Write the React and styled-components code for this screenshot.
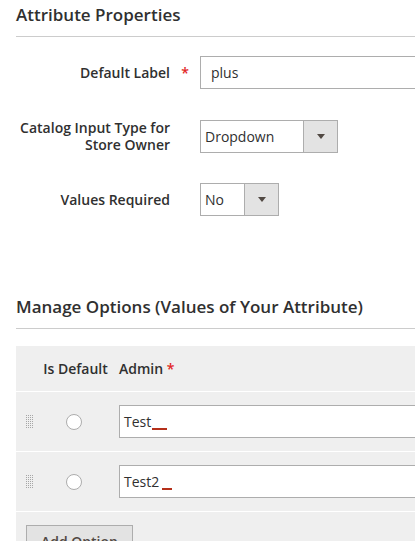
import React from 'react';
import styled, {createGlobalStyle} from 'styled-components';

const GlobalStyle = createGlobalStyle`
  body {
    margin: 0;
    background: #fff;
    font-family: "Open Sans", "Liberation Sans", sans-serif;
    color: #303030;
    overflow: hidden;
  }
`;

const Page = styled.div`
  width: 415px;
  height: 541px;
  overflow: hidden;
`;

const Inner = styled.div`
  width: 520px;
  padding-left: 16px;
  box-sizing: border-box;
`;

const SectionTitle = styled.h2`
  margin: 0;
  margin-top: ${p => p.top || 0}px;
  padding: 4px 0 10px;
  font-size: 17px;
  line-height: 22px;
  font-weight: 600;
  color: #303030;
  border-bottom: 1px solid #ccc;
`;

const Fields = styled.div`
  display: flex;
  flex-direction: column;
  gap: 30px;
  padding-top: 19px;
`;

const FieldRow = styled.div`
  display: grid;
  grid-template-columns: 154px 30px 1fr;
  align-items: center;
`;

const Label = styled.label`
  text-align: right;
  font-size: 14px;
  line-height: 17px;
  font-weight: 600;
  color: #303030;
`;

const Required = styled.span`
  color: #e22626;
  font-size: 14px;
  text-align: center;
  font-weight: 600;
`;

const TextInput = styled.div`
  height: 33px;
  box-sizing: border-box;
  border: 1px solid #adadad;
  border-right: none;
  background: #fff;
  display: flex;
  align-items: center;
  padding-left: ${p => p.pad || 10}px;
  font-size: 14px;
  color: #303030;
`;

const Select = styled.div`
  width: ${p => p.width}px;
  height: 33px;
  box-sizing: border-box;
  border: 1px solid #adadad;
  background: #fff;
  display: flex;
  font-size: 14px;
  color: #303030;
`;

const SelectValue = styled.span`
  flex: 1;
  display: flex;
  align-items: center;
  padding-left: 4px;
`;

const SelectArrow = styled.span`
  width: 33px;
  border-left: 1px solid #adadad;
  background: #e3e3e3;
  display: flex;
  align-items: center;
  justify-content: center;

  &::after {
    content: "";
    border-left: 4px solid transparent;
    border-right: 4px solid transparent;
    border-top: 5px solid #514943;
  }
`;

const Table = styled.div`
  margin-top: 17px;
  background: #efefef;
`;

const TableRow = styled.div`
  display: grid;
  grid-template-columns: 26px 66px 1fr;
  align-items: center;
  height: ${p => p.h}px;
  border-bottom: 1px solid #fff;

  & > :nth-child(3) {
    margin-left: 11px;
  }
`;

const HeadCell = styled.span`
  font-size: 14px;
  font-weight: 600;
  color: #303030;
  text-align: ${p => p.$center ? 'center' : 'left'};
  padding-left: ${p => p.$center ? 1 : 0}px;
`;

const Handle = styled.svg`
  margin-left: 10px;
  display: block;
`;

const Radio = styled.span`
  justify-self: center;
  margin-left: -3px;
  width: 16px;
  height: 16px;
  box-sizing: border-box;
  border-radius: 50%;
  border: 1px solid #adadad;
  background: #fff;
`;

const Squiggle = styled.span`
  display: inline-block;
  width: ${p => p.$w}px;
  margin-left: ${p => p.$gap}px;
  height: 14px;
  border-bottom: 2px solid #b5301a;
`;

const Footer = styled.div`
  padding: 13px 10px;
`;

const Button = styled.button`
  height: 33px;
  padding: 0 14px;
  background: #e3e3e3;
  border: 1px solid #adadad;
  font-family: inherit;
  font-size: 14px;
  font-weight: 600;
  color: #514943;
`;

const DragHandle = () => (
  <Handle width="8" height="14" viewBox="0 0 8 14">
    {Array.from({length: 7}).map((_, r) =>
      Array.from({length: 4}).map((_, c) => (
        <rect key={r + '-' + c} x={c * 2} y={r * 2} width="1" height="1" fill="#a6a6a6"/>
      ))
    )}
  </Handle>
);

const options = [
  {value: 'Test', w: 15, gap: 1},
  {value: 'Test2', w: 10, gap: 3}
];

export default function App() {
  return (
    <Page>
      <GlobalStyle/>
      <Inner>
        <SectionTitle>Attribute Properties</SectionTitle>
        <Fields>
          <FieldRow>
            <Label>Default Label</Label>
            <Required>*</Required>
            <TextInput pad={10}>plus</TextInput>
          </FieldRow>
          <FieldRow>
            <Label>Catalog Input Type for Store Owner</Label>
            <span/>
            <Select width={138}>
              <SelectValue>Dropdown</SelectValue>
              <SelectArrow/>
            </Select>
          </FieldRow>
          <FieldRow>
            <Label>Values Required</Label>
            <span/>
            <Select width={79}>
              <SelectValue>No</SelectValue>
              <SelectArrow/>
            </Select>
          </FieldRow>
        </Fields>

        <SectionTitle top={76}>Manage Options (Values of Your Attribute)</SectionTitle>
        <Table>
          <TableRow h={45}>
            <span/>
            <HeadCell $center>Is Default</HeadCell>
            <HeadCell>Admin <Required>*</Required></HeadCell>
          </TableRow>
          {options.map(o => (
            <TableRow h={59} key={o.value}>
              <DragHandle/>
              <Radio/>
              <TextInput pad={4}>
                {o.value}<Squiggle $w={o.w} $gap={o.gap}/>
              </TextInput>
            </TableRow>
          ))}
          <Footer>
            <Button>Add Option</Button>
          </Footer>
        </Table>
      </Inner>
    </Page>
  );
}
